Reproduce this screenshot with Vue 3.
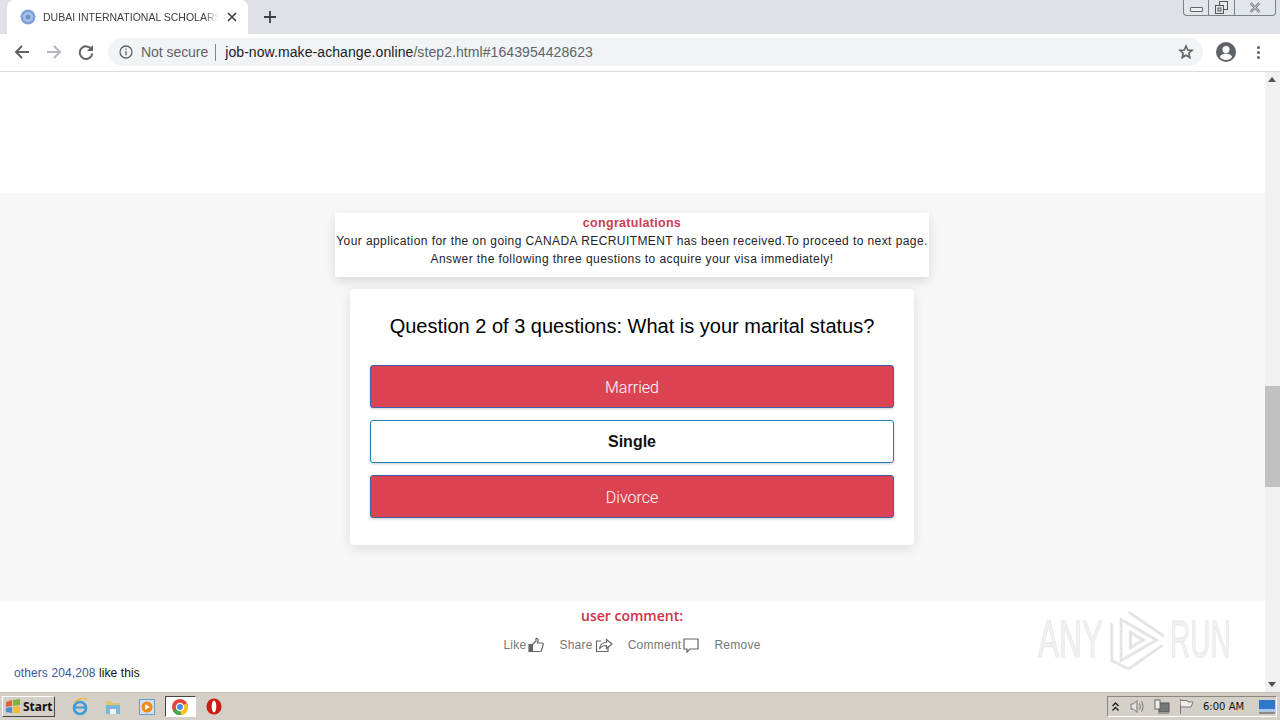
<template>
  <div class="screen">
    <!-- TAB STRIP -->
    <div class="tabstrip">
      <div class="tab">
        <svg class="favicon" width="16" height="16" viewBox="0 0 16 16">
          <circle cx="8" cy="8" r="7.500" fill="#7f9fd6" />
          <circle cx="8" cy="8" r="5" fill="#a9c0e8" />
          <circle cx="8" cy="8" r="2.500" fill="#6d8fcb" />
        </svg>
        <span class="tab-title">DUBAI INTERNATIONAL SCHOLARSHIP</span>
        <svg class="tab-close" width="10" height="10" viewBox="0 0 10 10">
          <path d="M1 1l8 8M9 1l-8 8" stroke="#3c4043" stroke-width="1.600" />
        </svg>
      </div>
      <svg class="new-tab" width="12" height="12" viewBox="0 0 12 12">
        <path d="M6 0v12M0 6h12" stroke="#3c4043" stroke-width="1.800" />
      </svg>
      <div class="win-controls">
        <span class="win-btn min"><i></i></span>
        <span class="win-btn restore">
          <svg width="13" height="13" viewBox="0 0 13 13" fill="none" stroke="#555">
            <rect x="4.500" y="0.500" width="8" height="8" fill="#e6e8ec" />
            <rect x="0.500" y="4.500" width="8" height="8" fill="#e6e8ec" />
            <rect x="3" y="7" width="3" height="3" />
          </svg>
        </span>
        <span class="win-btn close">
          <svg width="12" height="11" viewBox="0 0 12 11">
            <path d="M1.500 1l9 9M10.500 1l-9 9" stroke="#666" stroke-width="2.400" />
            <path d="M1.500 1l9 9M10.500 1l-9 9" stroke="#eee" stroke-width="1" />
          </svg>
        </span>
      </div>
    </div>

    <!-- TOOLBAR -->
    <div class="toolbar">
      <svg class="nav-icon" width="16" height="16" viewBox="0 0 16 16" fill="none" stroke="#5f6368" stroke-width="2">
        <path d="M15 8H2M8 2L2 8l6 6" />
      </svg>
      <svg class="nav-icon" width="16" height="16" viewBox="0 0 16 16" fill="none" stroke="#b4b7bb" stroke-width="2">
        <path d="M1 8h13M8 2l6 6-6 6" />
      </svg>
      <svg class="nav-icon" width="16" height="16" viewBox="0 0 16 16" fill="none">
        <path d="M13.500 5.500A6.300 6.300 0 1 0 14.300 9.500" stroke="#5f6368" stroke-width="2" />
        <path d="M15 1v6H9z" fill="#5f6368" />
      </svg>
      <div class="omnibox">
        <svg width="14" height="14" viewBox="0 0 14 14" fill="none" stroke="#5f6368" stroke-width="1.300">
          <circle cx="7" cy="7" r="6" />
          <path d="M7 6v4.200M7 3.400v1.400" />
        </svg>
        <span class="not-secure">Not secure</span>
        <span class="sep"></span>
        <span class="url"><b>job-now.make-achange.online</b>/step2.html#1643954428623</span>
        <svg class="star" width="16" height="16" viewBox="0 0 16 16" fill="none" stroke="#5f6368" stroke-width="1.600">
          <path d="M8 2l1.800 4 4.300.4-3.300 2.800 1 4.300L8 11.200 4.200 13.500l1-4.300L1.900 6.400 6.200 6z" />
        </svg>
      </div>
      <svg class="avatar" width="20" height="20" viewBox="0 0 20 20">
        <circle cx="10" cy="10" r="10" fill="#5f6368" />
        <circle cx="10" cy="7.500" r="3.500" fill="#fff" />
        <path d="M3.800 15c1.400-2.400 3.800-3.400 6.200-3.400s4.800 1 6.200 3.400c-1.500 1.800-3.700 3-6.200 3s-4.700-1.200-6.200-3z" fill="#fff" />
      </svg>
      <span class="dots"><i></i><i></i><i></i></span>
    </div>

    <!-- VIEWPORT -->
    <div class="viewport">
      <main class="page">
        <div class="ad-space"></div>
        <section class="band">
          <div class="notice">
            <div class="notice-title">congratulations</div>
            <p>Your application for the on going CANADA RECRUITMENT has been received.To proceed to next page.</p>
            <p>Answer the following three questions to acquire your visa immediately!</p>
          </div>
          <div class="quiz">
            <h2>Question 2 of 3 questions: What is your marital status?</h2>
            <button
              v-for="option in options"
              :key="option.label"
              class="answer"
              :class="{ picked: option.picked }"
            >{{ option.label }}</button>
          </div>
        </section>
        <section class="comments">
          <div class="comment-title">user comment:</div>
          <div class="actions">
            <span class="action">Like
              <svg width="16" height="16" viewBox="0 0 16 16" fill="none" stroke="#666" stroke-width="1.200">
                <path d="M1 7.500h3.500v7H1z" fill="#666" />
                <path d="M4.500 7.500L8 4V1.500c1.500-.5 2.500 1 2 2.500L9.500 6H14c1 0 1.500 1 1 2l-1.500 5.500c-.3.7-.8 1-1.500 1H4.500" />
              </svg>
            </span>
            <span class="action">Share
              <svg width="18" height="16" viewBox="0 0 18 16" fill="none" stroke="#666" stroke-width="1.200">
                <path d="M13 10v4.500H1.500V4H6" />
                <path d="M4.500 12c.5-4 3-6.500 7-6.500V2.500L17 7l-5.500 4.500V8.500c-3 0-5.500 1-7 3.500z" />
              </svg>
            </span>
            <span class="action">Comment
              <svg width="16" height="15" viewBox="0 0 16 15" fill="none" stroke="#666" stroke-width="1.200">
                <path d="M1 1h14v10H7l-3 3v-3H1z" />
              </svg>
            </span>
            <span class="action">Remove</span>
          </div>
          <div class="likes"><a>others 204,208</a> like this</div>
          <!-- watermark -->
          <div class="watermark">
            <span class="wm-any">ANY</span>
            <svg width="56" height="62" viewBox="0 0 60 64" fill="none" stroke="#e4e4e4" stroke-width="3">
              <path d="M14 10L52 32 14 54z" />
              <path d="M22 2L60 28M4 14v40l18 9L58 38" />
              <path d="M24 24l14 8-14 8z" />
            </svg>
            <span class="wm-run">RUN</span>
          </div>
        </section>
      </main>
      <aside class="scrollbar">
        <span class="arrow up"></span>
        <span class="track"><span class="thumb"></span></span>
        <span class="arrow down"></span>
      </aside>
    </div>

    <!-- TASKBAR -->
    <footer class="taskbar">
      <button class="start">
        <svg width="16" height="15" viewBox="0 0 16 15">
          <path d="M1 3l6-2v6l-6 1z" fill="#e0613a" />
          <path d="M8 1l7-1v6l-7 1z" fill="#7db23c" />
          <path d="M1 9l6-1v6l-6-1z" fill="#4a8bd8" />
          <path d="M8 8l7-1v7H8z" fill="#f0c030" />
        </svg>
        Start
      </button>
      <div class="quick">
        <svg width="18" height="18" viewBox="0 0 18 18" fill="none">
          <circle cx="9" cy="10" r="6" stroke="#3b9bd8" stroke-width="2.600" />
          <path d="M4 9.500h10" stroke="#3b9bd8" stroke-width="2" />
          <path d="M3 5c4-5 11-6 13-3" stroke="#e8b83a" stroke-width="1.400" />
        </svg>
        <svg width="16" height="16" viewBox="0 0 16 16">
          <path d="M1 2h5l1 2h8v11H1z" fill="#e3c667" />
          <rect x="1" y="6" width="14" height="9" fill="#79b9d8" />
          <rect x="5" y="10" width="6" height="5" fill="#eef3f6" />
        </svg>
        <svg width="16" height="16" viewBox="0 0 16 16">
          <rect x="0.500" y="0.500" width="15" height="15" fill="#cfe0f2" stroke="#6f9ccb" />
          <circle cx="8" cy="8" r="5.500" fill="#f08a1d" />
          <path d="M6.200 5l4.600 3-4.600 3z" fill="#fff" />
        </svg>
        <span class="task-active">
          <svg width="16" height="16" viewBox="0 0 16 16">
            <circle cx="8" cy="8" r="8" fill="#e2453a" />
            <path d="M8 8L1 12a8 8 0 0 0 8 4z" fill="#39a853" />
            <path d="M8 8l1 8a8 8 0 0 0 6-12z" fill="#f7c518" />
            <circle cx="8" cy="8" r="3.600" fill="#4a88e8" stroke="#fff" stroke-width="1.300" />
          </svg>
        </span>
        <svg width="16" height="17" viewBox="0 0 16 17">
          <ellipse cx="8" cy="8.500" rx="7.500" ry="8" fill="#cc1b14" />
          <ellipse cx="8" cy="8.500" rx="2.300" ry="6" fill="#fff" />
        </svg>
      </div>
      <div class="tray">
        <svg class="tray-chevrons" width="7" height="9" viewBox="0 0 7 9" fill="none" stroke="#222" stroke-width="1.400">
          <path d="M.5 4L3.500 1l3 3M.5 8.500l3-3 3 3" />
        </svg>
        <svg class="tray-speaker" width="16" height="15" viewBox="0 0 16 15" fill="none" stroke="#777">
          <path d="M1 5h2.500L7 1.500v12L3.500 10H1z" fill="#e4e4e4" />
          <path d="M9.500 4.500c1 2 1 4 0 6M11.500 2.500c2 3 2 7 0 10" />
        </svg>
        <svg class="tray-net" width="16" height="16" viewBox="0 0 16 16">
          <rect x="5" y="4" width="10" height="9" fill="#777" stroke="#555" />
          <rect x="1" y="1" width="5" height="9" fill="#eee" stroke="#666" />
          <rect x="4" y="13" width="11" height="2" fill="#999" />
        </svg>
        <svg class="tray-flag" width="15" height="15" viewBox="0 0 15 15" fill="none" stroke="#777">
          <path d="M1.500 0v15" />
          <path d="M1.500 1.500H8L9 3h5l-2 5H2" fill="#eee" />
        </svg>
        <span class="clock">6:00 AM</span>
        <svg class="tray-desktop" width="16" height="14" viewBox="0 0 16 14">
          <rect width="16" height="12" fill="#2f78c8" />
          <rect y="9" width="16" height="3" fill="#a7c7e7" />
          <rect y="12" width="16" height="2" fill="#8a8a8a" />
        </svg>
      </div>
    </footer>
  </div>
</template>

<script setup>
const options = [
  { label: 'Married', picked: false },
  { label: 'Single', picked: true },
  { label: 'Divorce', picked: false }
]
</script>

<style>
html, body { margin: 0; overflow: hidden; }
</style>

<style scoped>
.screen { width: 1280px; height: 720px; display: flex; flex-direction: column; overflow: hidden; background: #fff; font-family: 'Liberation Sans', Arial, sans-serif; }

.tabstrip { height: 34px; background: #dee1e6; display: flex; align-items: flex-end; padding-left: 7px; flex: none; box-sizing: border-box; }
.tab { width: 241px; height: 34px; padding: 0 0 0 13px; background: #fff; border-radius: 7px 7px 0 0; display: flex; align-items: center; box-sizing: border-box; }
.favicon { flex: none; margin-right: 7px; }
.tab-title { font-size: 10.500px; color: #3c4043; white-space: nowrap; overflow: hidden; width: 175px; flex: none; -webkit-mask-image: linear-gradient(90deg, #000 92%, transparent); mask-image: linear-gradient(90deg, #000 92%, transparent); }
.tab-close { flex: none; margin-left: 9px; }
.new-tab { align-self: center; margin-left: 16px; }
.win-controls { margin-left: auto; margin-right: 4px; align-self: flex-start; height: 16px; width: 93px; display: flex; border: 1px solid #7c8087; border-top: 0; border-radius: 0 0 4px 4px; box-sizing: border-box; background: #e2e5e9; }
.win-btn { display: flex; align-items: center; justify-content: center; border-right: 1px solid #7c8087; }
.win-btn.min { width: 24px; }
.win-btn.min i { width: 11px; height: 3px; margin-top: 4px; border: 1px solid #666; background: #eee; border-radius: 1px; }
.win-btn.restore { width: 25px; }
.win-btn.close { flex: 1; border-right: 0; }

.toolbar { height: 38px; flex: none; box-sizing: border-box; padding: 0 0 1px 14px; display: flex; align-items: center; background: #fff; border-bottom: 1px solid #dadce0; }
.nav-icon { margin-right: 16px; }
.nav-icon:nth-child(3) { margin-right: 14px; }
.omnibox { width: 1095px; height: 28px; background: #f1f3f4; border-radius: 14px; display: flex; align-items: center; padding: 0 9px 0 11px; box-sizing: border-box; flex: none; }
.not-secure { font-size: 14px; color: #5f6368; margin-left: 8px; letter-spacing: -.05px; }
.sep { width: 1px; height: 17px; background: #80868b; margin: 0 9px 0 7px; }
.url { font-size: 14px; color: #5f6368; white-space: nowrap; letter-spacing: .08px; }
.url b { font-weight: 400; color: #202124; }
.star { margin-left: auto; }
.avatar { margin-left: 13px; }
.dots { margin-left: 21px; display: flex; flex-direction: column; gap: 2px; }
.dots i { width: 3px; height: 3px; border-radius: 50%; background: #5f6368; }

.viewport { height: 620px; flex: none; display: flex; }
.page { width: 1265px; flex: none; display: flex; flex-direction: column; }
.ad-space { height: 121px; background: #fff; flex: none; }
.band { height: 408px; flex: none; background: #f7f7f7; display: flex; flex-direction: column; align-items: center; padding: 20px 1px 0 0; box-sizing: border-box; }

.notice { width: 594px; height: 64px; background: #fff; text-align: center; font-size: 12px; line-height: 18px; color: #212529; box-shadow: 0 4px 10px rgba(0, 0, 0, .12); padding-top: 1px; box-sizing: border-box; letter-spacing: .42px; white-space: nowrap; }
.notice p { margin: 0; }
.notice-title { color: #c9404f; font-weight: 700; font-size: 12.500px; letter-spacing: .3px; }

.quiz { width: 564px; height: 256px; margin-top: 12px; background: #fff; border-radius: 4px; box-shadow: 0 4px 12px rgba(0, 0, 0, .1); padding: 0 20px; box-sizing: border-box; display: flex; flex-direction: column; }
.quiz h2 { margin: 25px 0 27px; font-size: 20px; line-height: 24px; font-weight: 400; text-align: center; color: #000; white-space: nowrap; }
.answer { height: 43px; flex: none; margin-bottom: 12px; background: #dc4352; color: #fff; border: 1px solid #3a62b0; border-radius: 3px; font-family: Roboto, 'Liberation Sans', sans-serif; font-size: 16px; font-weight: 300; box-shadow: 0 1px 3px rgba(0, 0, 0, .2); padding: 1px 0 0; }
.answer.picked { background: #fff; color: #111; border-color: #1f7fb5; font-family: 'Liberation Sans', sans-serif; font-weight: 700; font-size: 16px; padding: 0; }

.comments { position: relative; flex: 1; background: #fff; font-family: 'Liberation Sans', sans-serif; box-sizing: border-box; }
.comment-title { text-align: center; color: #cf3049; font-family: 'Open Sans', sans-serif; font-size: 14px; font-weight: 600; line-height: 16px; margin-top: 7px; padding-right: 1px; }
.actions { display: flex; justify-content: center; align-items: center; gap: 15px; margin-top: 11px; height: 20px; font-size: 12px; color: #777; padding-right: 1px; }
.action { display: flex; align-items: center; gap: 2px; letter-spacing: .25px; }
.likes { margin: 10px 0 0 14px; font-size: 12px; color: #111; line-height: 16px; letter-spacing: .1px; }
.likes a { color: #3b5998; }

.watermark { position: absolute; left: 1038px; top: 8px; display: flex; align-items: center; color: #f1f1f1; font-size: 51px; line-height: 62px; -webkit-text-stroke: 1px #e6e6e6; }
.wm-any { display: inline-block; width: 70px; transform: scaleX(.62); transform-origin: left center; }
.wm-run { display: inline-block; width: 62px; margin-left: 6px; transform: scaleX(.55); transform-origin: left center; }

.scrollbar { width: 15px; flex: none; background: #f1f1f1; display: flex; flex-direction: column; align-items: center; }
.track { flex: 1; width: 100%; position: relative; }
.thumb { position: absolute; left: 0; right: 0; top: 299px; height: 101px; background: #c1c1c1; }
.arrow { height: 15px; flex: none; width: 100%; position: relative; }
.arrow::after { content: ''; position: absolute; left: 3px; border-left: 4.500px solid transparent; border-right: 4.500px solid transparent; }
.arrow.up::after { top: 5px; border-bottom: 5px solid #505050; }
.arrow.down::after { top: 5px; border-top: 5px solid #505050; }

.taskbar { height: 28px; flex: none; box-sizing: border-box; background: #d4d0c8; border-top: 1px solid #c4c0b8; display: flex; align-items: center; }
.start { width: 53px; height: 21px; margin-left: 2px; padding: 0 0 0 2px; background: #d4d0c8; border: 1px solid; border-color: #fff #444 #444 #fff; display: flex; align-items: center; gap: 2px; font-family: 'Noto Sans', sans-serif; font-size: 12px; font-weight: 700; color: #111; box-sizing: border-box; }
.quick { display: grid; grid-template-columns: repeat(5, 33.500px); justify-items: center; align-items: center; margin-left: 8px; }
.task-active { width: 31px; height: 21px; background: #fff; border: 1px solid; border-color: #444 #fff #fff #444; display: flex; align-items: center; justify-content: center; box-sizing: border-box; }
.tray { margin-left: auto; margin-right: 3px; height: 21px; width: 170px; box-sizing: border-box; border: 1px solid; border-color: #8a867e #fff #fff #8a867e; display: flex; align-items: center; padding-left: 4px; }
.tray-speaker { margin-left: 11px; }
.tray-net { margin-left: 8px; }
.tray-flag { margin-left: 9px; }
.clock { font-family: 'DejaVu Sans', sans-serif; font-size: 10px; color: #111; margin-left: 9px; white-space: nowrap; }
.tray-desktop { margin-left: auto; margin-right: 1px; }
</style>
